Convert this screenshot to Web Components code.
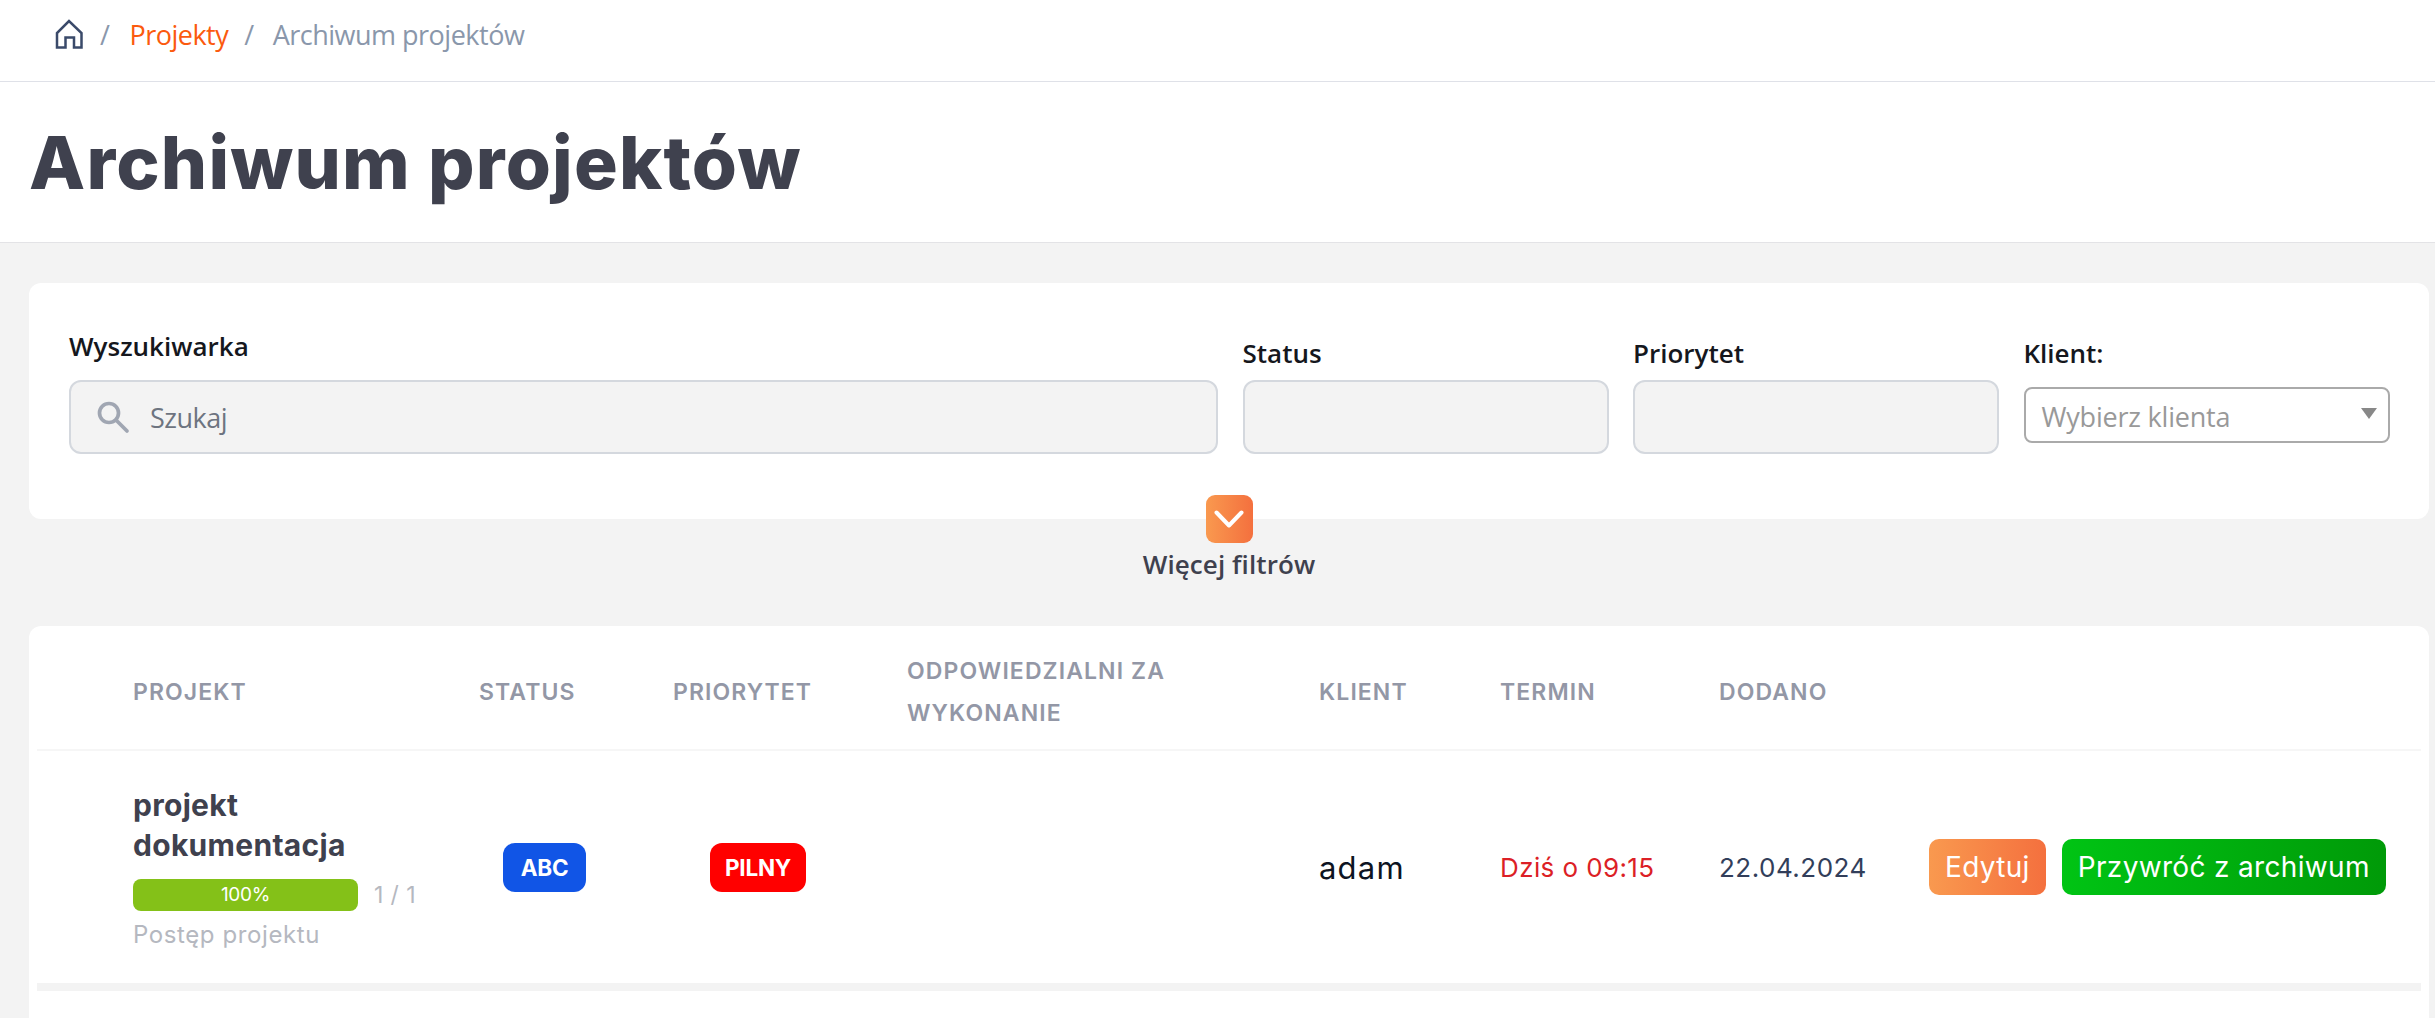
<!DOCTYPE html>
<html lang="pl"><head><meta charset="utf-8"><title>Archiwum projektów</title>
<style>
html,body{margin:0;padding:0;height:1018px;overflow:hidden;background:#f3f3f3}
body{display:flex;flex-direction:column;font-family:"Open Sans","Liberation Sans",sans-serif}
main{display:flex;flex-direction:column;flex:1;min-height:0;padding:40px 6px 0 29px}
</style></head><body>
<x-breadcrumb></x-breadcrumb>
<x-page-title>Archiwum projektów</x-page-title>
<main>
<x-filter-card>
  <x-field label="Wyszukiwarka" gap="19" top="0"><x-search-box>Szukaj</x-search-box></x-field>
  <x-field label="Status" gap="12" top="7"><x-empty-box></x-empty-box></x-field>
  <x-field label="Priorytet" gap="12" top="7"><x-empty-box></x-empty-box></x-field>
  <x-field label="Klient:" gap="19" top="7"><x-select-box>Wybierz klienta</x-select-box></x-field>
</x-filter-card>
<x-more-filters>Więcej filtrów</x-more-filters>
<x-project-table></x-project-table>
</main>
<script>
function def(name,html,init){customElements.define(name,class extends HTMLElement{
  constructor(){super();this.attachShadow({mode:'open'}).innerHTML=html}
  connectedCallback(){if(init)init.call(this,this.shadowRoot)}
})}
const POP='Inter,"Noto Sans",sans-serif', SEG='"Open Sans","Noto Sans",sans-serif';
def('x-breadcrumb',`<style>
:host{display:flex;align-items:center;height:82px;box-sizing:border-box;padding:0 0 13px 55px;background:#fff;border-bottom:1px solid #dfe1e8;font:27px ${SEG};color:#8a97ab;letter-spacing:-.5px}
svg{display:block;width:30px;height:30px}
.s{margin:0 20px 0 15px}.s2{margin:0 19px 0 16px}
a{color:#fb5a0e}span{white-space:nowrap}
</style>
<svg viewBox="0 0 30 30" fill="none" stroke="#3a4a6a" stroke-width="2.500"><path d="M2 28.500V14L14 2l12.500 12v14.500H19V18.500H10.500V28.500Z" stroke-linejoin="miter"/></svg>
<span class="s">/</span><a>Projekty</a><span class="s2">/</span><span>Archiwum projektów</span>`);
def('x-page-title',`<style>
:host{display:flex;align-items:center;height:160px;padding:0 0 0 29px;background:#fff;border-bottom:1px solid #e3e3e6}
h1{margin:0;font:800 73px ${POP};color:#3f414e;letter-spacing:1.2px;white-space:nowrap}
</style><h1><slot></slot></h1>`);
def('x-filter-card',`<style>
:host{display:grid;grid-template-columns:1149px 366px 366px 366px;column-gap:24.5px;align-content:start;height:236px;box-sizing:border-box;padding:48px 0 0 40px;background:#fff;border-radius:12px}
</style><slot></slot>`);
def('x-field',`<style>
:host{display:flex;flex-direction:column}
label{display:block;font:600 26px/30px ${SEG};color:#15171d}
</style><label></label><slot></slot>`,function(r){const l=r.querySelector('label');l.textContent=this.getAttribute('label');l.style.marginTop=this.getAttribute('top')+'px';l.style.marginBottom=this.getAttribute('gap')+'px'});
def('x-search-box',`<style>
:host{display:flex;align-items:center;height:74px;box-sizing:border-box;padding-left:25px;background:#f3f3f3;border:2px solid #d4d8de;border-radius:12px;font:27px ${SEG};color:#6d7480;letter-spacing:-.5px}
svg{width:34px;height:34px;margin-right:20px;flex:none}
</style><svg viewBox="0 0 34 34" fill="none" stroke="#a0a6b2" stroke-width="3.700"><circle cx="13" cy="13" r="9.500"/><path d="M20 20l11 11" stroke-linecap="round"/></svg><slot></slot>`);
def('x-empty-box',`<style>:host{display:block;height:74px;box-sizing:border-box;background:#f3f3f3;border:2px solid #d4d8de;border-radius:12px}</style>`);
def('x-select-box',`<style>
:host{display:flex;align-items:center;justify-content:space-between;height:56px;box-sizing:border-box;padding:0 11px 0 16px;background:#fff;border:2px solid #aaa;border-radius:8px;font:27px ${SEG};color:#999;letter-spacing:-.2px}
span{padding-top:3px}
i{width:0;height:0;border:8.500px solid transparent;border-top:11px solid #888;border-bottom:0;margin-top:-3px}
</style><span><slot></slot></span><i></i>`);
def('x-more-filters',`<style>
:host{display:flex;flex-direction:column;align-items:center;margin:-24px 0 0;width:2400px;font:600 26px/30px ${SEG};color:#3f414e;letter-spacing:.1px}
b{display:flex;align-items:center;justify-content:center;width:47px;height:48px;border-radius:9px;background:linear-gradient(90deg,#f9994f,#f4703e);margin-bottom:6px}
svg{width:30px;height:18px}
</style><b><svg viewBox="0 0 30 18" fill="none" stroke="#fff" stroke-width="4" stroke-linecap="round" stroke-linejoin="round"><path d="M2.500 2.500L15 15.500 27.500 2.500"/></svg></b><span><slot></slot></span>`);
def('x-badge',`<style>
:host{display:flex;align-items:center;justify-content:center;height:49px;border-radius:12px;color:#fff;font:700 22.500px ${POP};letter-spacing:-.2px;background:var(--c)}
</style><slot></slot>`);
def('x-progress',`<style>
:host{display:flex;align-items:center;margin-top:14px;font:400 23px ${POP}}
.bar{display:flex;align-items:center;justify-content:center;width:225px;height:32px;border-radius:8px;background:#84c118;color:#fff;font-size:19px;letter-spacing:-.3px}
.n{margin-left:16px;color:#b5b8c0;letter-spacing:.4px}
</style><div class="bar">100%</div><div class="n">1 / 1</div>`);
def('x-action',`<style>
:host{display:flex;align-items:center;height:56px;box-sizing:border-box;padding:0 16px;border-radius:10px;color:#fff;font:400 28px ${POP};letter-spacing:.33px;white-space:nowrap;background:var(--c)}
</style><slot></slot>`);
def('x-project-table',`<style>
:host{display:block;margin-top:47px;flex:1;padding:0 8px;background:#fff;border-radius:12px 12px 0 0;font-family:${POP}}
.row{display:grid;grid-template-columns:96px 346px 194px 234px 412px 181px 219px 210px 1fr}
.head{height:114px;padding-top:9px;align-items:center;border-bottom:2px solid #f6f6f6;font:600 23px/42px ${POP};color:#9397a6;letter-spacing:1.100px}
.body{height:232px;align-items:center;border-bottom:8px solid #f3f3f3}
.name{font:700 30px/40px ${POP};color:#3f414e;letter-spacing:.3px}
.sub{margin-top:9px;font:400 24px/30px ${POP};color:#b5b8c0;letter-spacing:.6px}
.abc{--c:#1155e6;width:83px;margin-left:24px}
.pil{--c:#ff0000;width:96px;margin-left:37px}
.cli{font:400 31px ${POP};color:#0d1422;letter-spacing:1.200px}
.ter{font:400 26px ${POP};color:#dc1f26;letter-spacing:.4px}
.dat{font:400 26px ${POP};color:#323e5a;letter-spacing:.5px}
.act{display:flex;gap:16px}
.e{--c:linear-gradient(90deg,#f9994f,#f4703e)}
.g{--c:linear-gradient(90deg,#00c414,#009a08)}
</style>
<div class="row head"><span></span><span>PROJEKT</span><span>STATUS</span><span>PRIORYTET</span><span>ODPOWIEDZIALNI ZA<br>WYKONANIE</span><span>KLIENT</span><span>TERMIN</span><span>DODANO</span><span></span></div>
<div class="row body"><span></span>
<div><div class="name">projekt<br>dokumentacja</div><x-progress></x-progress><div class="sub">Postęp projektu</div></div>
<div><x-badge class="abc">ABC</x-badge></div><div><x-badge class="pil">PILNY</x-badge></div><span></span>
<span class="cli">adam</span><span class="ter">Dziś o 09:15</span><span class="dat">22.04.2024</span>
<div class="act"><x-action class="e">Edytuj</x-action><x-action class="g">Przywróć z archiwum</x-action></div></div>`);
</script>
</body></html>
